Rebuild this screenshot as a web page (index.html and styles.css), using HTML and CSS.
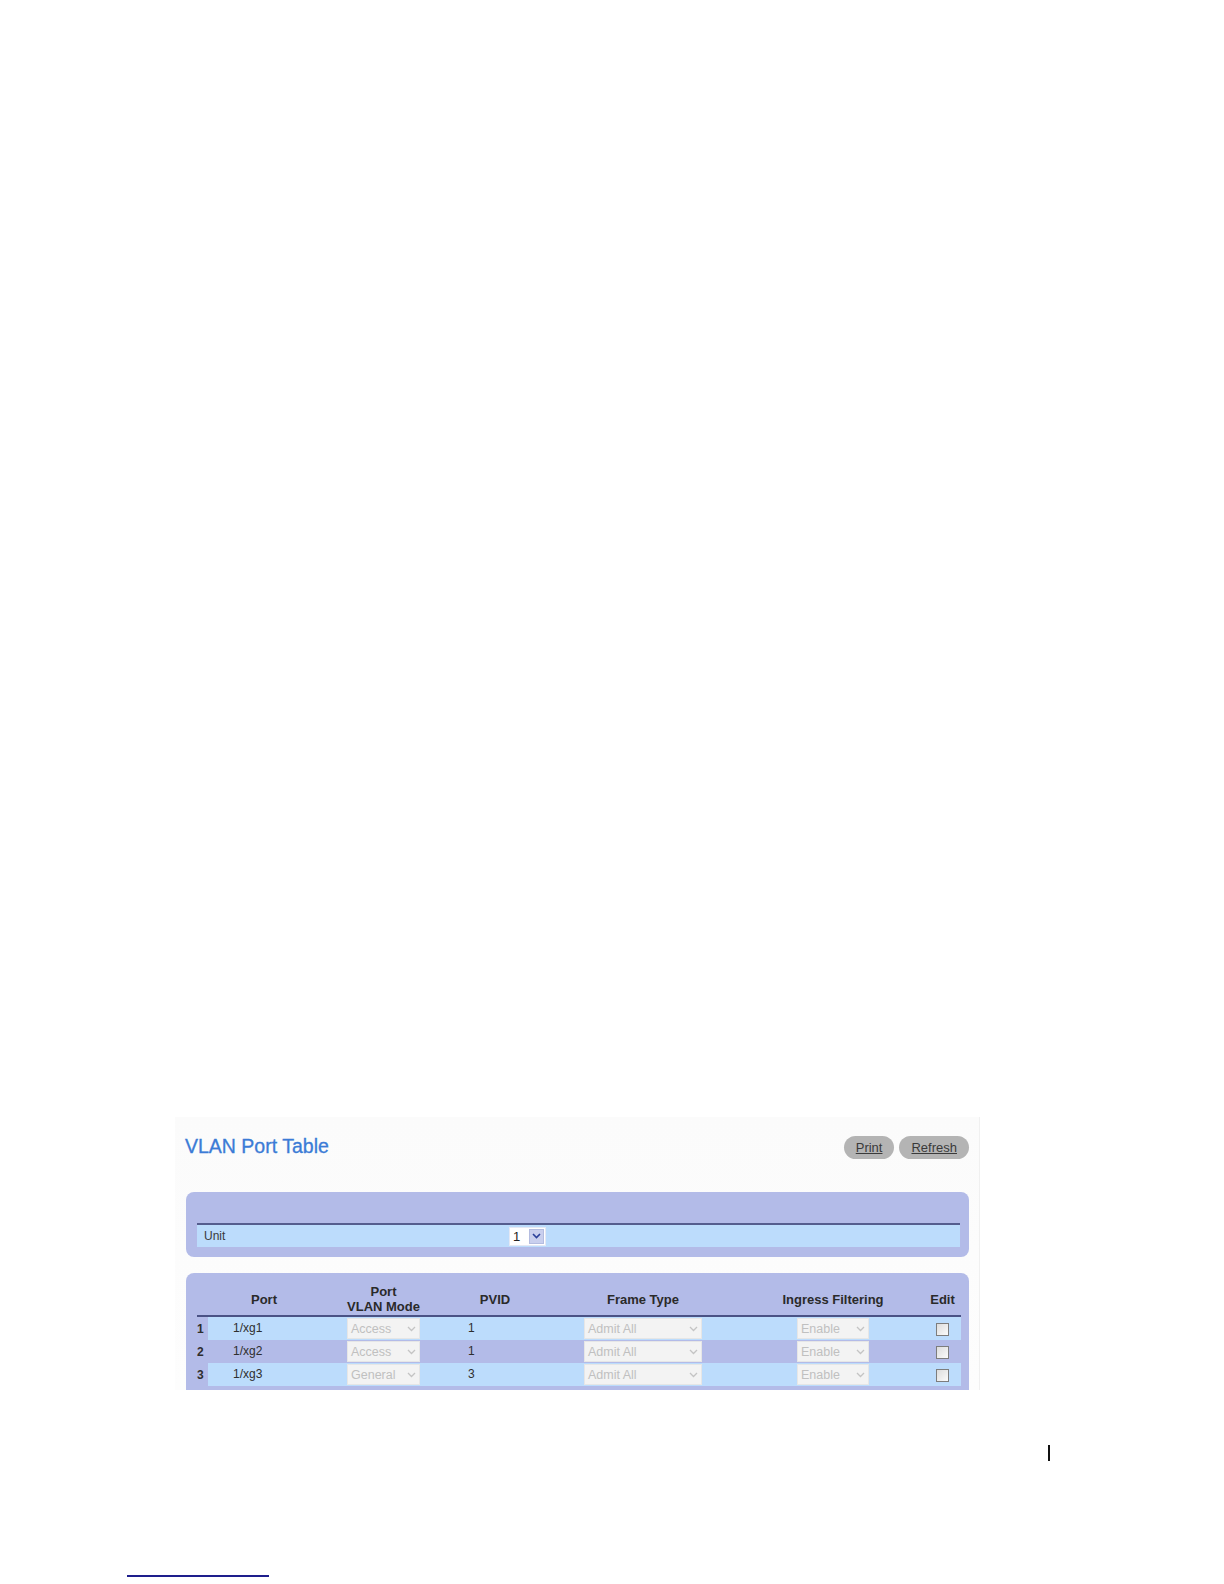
FILE: index.html
```html
<!DOCTYPE html>
<html lang="en">
<head>
<meta charset="utf-8">
<title>VLAN Port Table</title>
<link rel="stylesheet" href="styles.css">
</head>
<body>
<div class="page">
  <section class="panel">
    <div class="titlebar">
      <h1 class="title">VLAN Port Table</h1>
      <div class="actions">
        <a class="pill-btn" href="#">Print</a>
        <a class="pill-btn" href="#">Refresh</a>
      </div>
    </div>

    <div class="box unit-box">
      <div class="unit-row">
        <span class="unit-label">Unit</span>
        <span class="unit-select"><span class="unit-val">1</span><span class="unit-arrow"><svg width="9" height="6" viewBox="0 0 9 6"><path d="M1 1 L4.5 4.5 L8 1" fill="none" stroke="#2a3f9a" stroke-width="1.6"/></svg></span></span>
      </div>
    </div>

    <div class="box table-box">
      <table class="vlan-table">
        <colgroup>
          <col class="c-num"><col class="c-port"><col class="c-mode"><col class="c-pvid"><col class="c-frame"><col class="c-ingress"><col class="c-edit">
        </colgroup>
        <thead>
          <tr>
            <th></th>
            <th class="h-port">Port</th>
            <th>Port<br>VLAN Mode</th>
            <th>PVID</th>
            <th>Frame Type</th>
            <th>Ingress Filtering</th>
            <th class="h-edit">Edit</th>
          </tr>
        </thead>
        <tbody>
          <tr class="light">
            <td class="num">1</td>
            <td class="port"><span class="lift">1/xg1</span></td>
            <td class="ctr"><span class="dsel w-mode"><span class="dtext">Access</span><span class="darrow"><svg width="9" height="6" viewBox="0 0 9 6"><path d="M1 1 L4.5 4.5 L8 1" fill="none" stroke="#c4c4c4" stroke-width="1.3"/></svg></span></span></td>
            <td class="pvid"><span class="lift">1</span></td>
            <td class="ctr"><span class="dsel w-frame"><span class="dtext">Admit All</span><span class="darrow"><svg width="9" height="6" viewBox="0 0 9 6"><path d="M1 1 L4.5 4.5 L8 1" fill="none" stroke="#c4c4c4" stroke-width="1.3"/></svg></span></span></td>
            <td class="ctr"><span class="dsel w-ing"><span class="dtext">Enable</span><span class="darrow"><svg width="9" height="6" viewBox="0 0 9 6"><path d="M1 1 L4.5 4.5 L8 1" fill="none" stroke="#c4c4c4" stroke-width="1.3"/></svg></span></span></td>
            <td class="ctr edit"><span class="cbox"></span></td>
          </tr>
          <tr class="dark">
            <td class="num">2</td>
            <td class="port"><span class="lift">1/xg2</span></td>
            <td class="ctr"><span class="dsel w-mode"><span class="dtext">Access</span><span class="darrow"><svg width="9" height="6" viewBox="0 0 9 6"><path d="M1 1 L4.5 4.5 L8 1" fill="none" stroke="#c4c4c4" stroke-width="1.3"/></svg></span></span></td>
            <td class="pvid"><span class="lift">1</span></td>
            <td class="ctr"><span class="dsel w-frame"><span class="dtext">Admit All</span><span class="darrow"><svg width="9" height="6" viewBox="0 0 9 6"><path d="M1 1 L4.5 4.5 L8 1" fill="none" stroke="#c4c4c4" stroke-width="1.3"/></svg></span></span></td>
            <td class="ctr"><span class="dsel w-ing"><span class="dtext">Enable</span><span class="darrow"><svg width="9" height="6" viewBox="0 0 9 6"><path d="M1 1 L4.5 4.5 L8 1" fill="none" stroke="#c4c4c4" stroke-width="1.3"/></svg></span></span></td>
            <td class="ctr edit"><span class="cbox"></span></td>
          </tr>
          <tr class="light">
            <td class="num">3</td>
            <td class="port"><span class="lift">1/xg3</span></td>
            <td class="ctr"><span class="dsel w-mode"><span class="dtext">General</span><span class="darrow"><svg width="9" height="6" viewBox="0 0 9 6"><path d="M1 1 L4.5 4.5 L8 1" fill="none" stroke="#c4c4c4" stroke-width="1.3"/></svg></span></span></td>
            <td class="pvid"><span class="lift">3</span></td>
            <td class="ctr"><span class="dsel w-frame"><span class="dtext">Admit All</span><span class="darrow"><svg width="9" height="6" viewBox="0 0 9 6"><path d="M1 1 L4.5 4.5 L8 1" fill="none" stroke="#c4c4c4" stroke-width="1.3"/></svg></span></span></td>
            <td class="ctr"><span class="dsel w-ing"><span class="dtext">Enable</span><span class="darrow"><svg width="9" height="6" viewBox="0 0 9 6"><path d="M1 1 L4.5 4.5 L8 1" fill="none" stroke="#c4c4c4" stroke-width="1.3"/></svg></span></span></td>
            <td class="ctr edit"><span class="cbox"></span></td>
          </tr>
        </tbody>
      </table>
    </div>
  </section>

  <div class="page-mark"></div>
  <div class="footnote-rule"></div>
</div>
</body>
</html>
```

FILE: styles.css
```css
html, body {
  margin: 0;
  padding: 0;
  background: #ffffff;
}

body {
  font-family: "Liberation Sans", Arial, sans-serif;
  color: #333333;
}

.page {
  width: 1224px;
  height: 1584px;
  padding-top: 1117px;
  box-sizing: border-box;
}

.panel {
  margin-left: 175px;
  width: 805px;
  height: 273px;
  background: linear-gradient(#fbfbfb, #fdfdfd);
  border-right: 1px solid #f0f0f0;
  box-sizing: border-box;
  padding-top: 16px;
}

.titlebar {
  display: flex;
  align-items: center;
  justify-content: space-between;
  height: 26px;
  padding-left: 10px;
  padding-right: 10px;
}

.title {
  margin: 0;
  font-size: 19.5px;
  line-height: 24px;
  font-weight: normal;
  color: #3b7bd6;
  -webkit-text-stroke: 0.3px #3b7bd6;
}

.actions {
  display: flex;
  gap: 5px;
  margin-top: 2px;
}

.pill-btn {
  display: block;
  height: 23px;
  line-height: 23px;
  padding: 0 12px;
  border-radius: 12px;
  background: #b4b4b4;
  color: #3a3a3a;
  font-size: 13px;
  text-decoration: underline;
}

.box {
  margin-left: 11px;
  width: 783px;
  background: #b3bbe8;
  box-sizing: border-box;
}

.unit-box {
  margin-top: 33px;
  border-radius: 8px;
  padding: 31px 9px 10px 11px;
}

.unit-row {
  display: flex;
  align-items: center;
  height: 22px;
  border-top: 2px solid #555d8e;
  background: #bcdcfc;
}

.unit-label {
  width: 312px;
  padding-left: 7px;
  box-sizing: border-box;
  font-size: 12px;
  color: #3a3a3a;
}

.unit-select {
  display: flex;
  align-items: center;
  width: 37px;
  height: 19px;
  background: #ffffff;
  border: 1px solid #e4e8f4;
  box-sizing: border-box;
}

.unit-val {
  flex: 1;
  padding-left: 3px;
  font-size: 13px;
  color: #222222;
}

.unit-arrow {
  display: flex;
  align-items: center;
  justify-content: center;
  width: 15px;
  height: 15px;
  margin-right: 1px;
  background: #c9cfee;
  border: 1px solid #b4bce0;
  box-sizing: border-box;
}

.table-box {
  margin-top: 16px;
  height: 117px;
  border-radius: 8px 8px 0 0;
  padding: 10px 7px 0 11px;
  overflow: hidden;
}

.vlan-table {
  width: 764px;
  border-collapse: collapse;
  border-spacing: 0;
  table-layout: fixed;
}

.c-num { width: 11px; }
.c-port { width: 118px; }
.c-mode { width: 115px; }
.c-pvid { width: 108px; }
.c-frame { width: 188px; }
.c-ingress { width: 192px; }
.c-edit { width: 32px; }

.vlan-table th {
  height: 32px;
  padding: 0;
  font-size: 13px;
  line-height: 15px;
  font-weight: bold;
  color: #2a2a2a;
  text-align: center;
  vertical-align: middle;
  border-bottom: 2px solid #4a5285;
}

.vlan-table th.h-port {
  padding-right: 6px;
}

.vlan-table th.h-edit {
  padding-right: 5px;
}

.vlan-table tbody tr {
  height: 23px;
}

.vlan-table td {
  height: 23px;
  padding: 0;
  font-size: 12px;
  line-height: 14px;
  color: #2e2e2e;
  vertical-align: middle;
}

.vlan-table tr.light td {
  background: #bcdcfc;
}

.vlan-table tr.light td.num {
  background: transparent;
}

.vlan-table td.num {
  font-weight: bold;
  font-size: 12px;
}

.lift {
  position: relative;
  top: -1px;
}

.vlan-table td.port {
  padding-left: 25px;
}

.vlan-table td.pvid {
  padding-left: 27px;
}

.vlan-table td.ctr {
  text-align: center;
}

.vlan-table td.edit {
  padding-right: 5px;
}

.dsel {
  display: inline-flex;
  align-items: center;
  height: 21px;
  background: #f3f3f3;
  border: 1px solid #e6e6e6;
  box-sizing: border-box;
  vertical-align: middle;
  text-align: left;
}

.w-mode { width: 73px; }
.w-frame { width: 118px; }
.w-ing { width: 72px; }

.dtext {
  flex: 1;
  padding-left: 3px;
  font-size: 12.5px;
  color: #c0c0c0;
  white-space: nowrap;
  overflow: hidden;
}

.darrow {
  display: flex;
  align-items: center;
  justify-content: center;
  width: 14px;
  height: 17px;
  margin-right: 1px;
}

.cbox {
  display: inline-block;
  width: 13px;
  height: 13px;
  border: 1px solid #7d7d7d;
  background: linear-gradient(135deg, #dcdcdc, #fbfbfb);
  box-sizing: border-box;
  vertical-align: middle;
}

.page-mark {
  margin-top: 55px;
  margin-left: 1048px;
  width: 2px;
  height: 16px;
  background: #111111;
}

.footnote-rule {
  margin-top: 114px;
  margin-left: 127px;
  width: 142px;
  height: 2px;
  background: #1e1e8c;
}
```
